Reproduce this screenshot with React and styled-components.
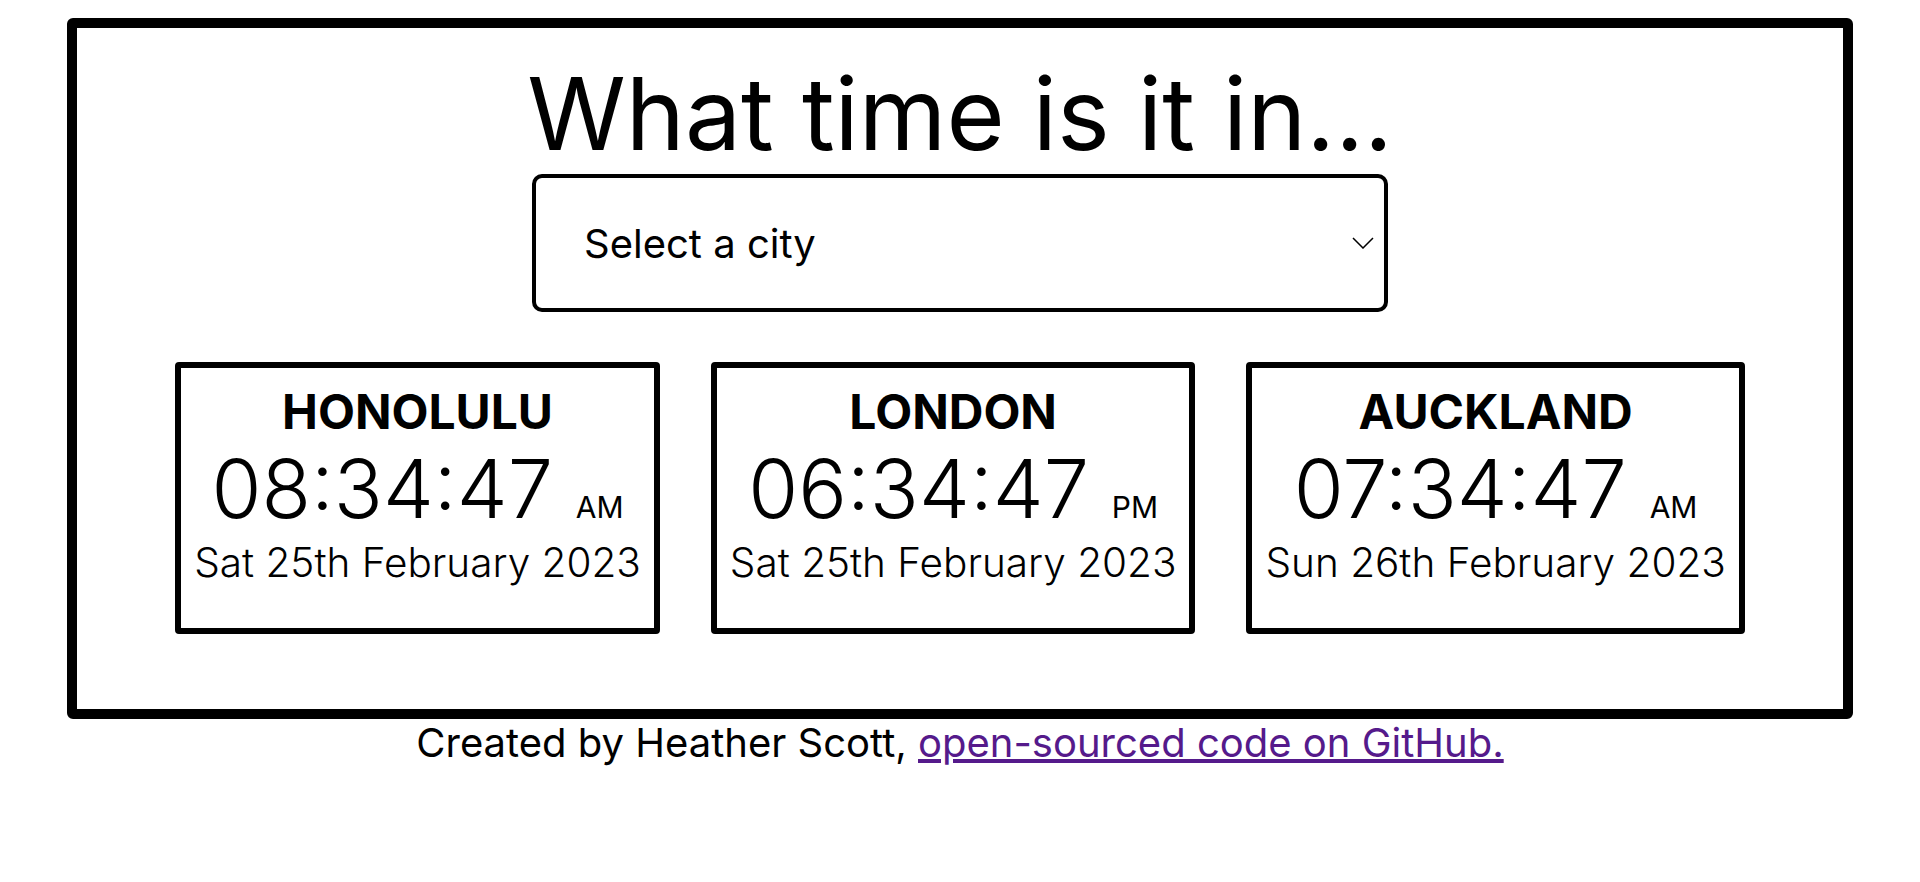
import React, { useState } from "react";
import styled, { createGlobalStyle } from "styled-components";

const GlobalStyle = createGlobalStyle`
  body {
    margin: 0;
    background: #fff;
    color: #000;
    font-family: Inter, "Noto Sans", sans-serif;
  }
`;

const Frame = styled.main`
  width: 93%;
  margin: 18px auto 0;
  box-sizing: border-box;
  border: 10px solid #000;
  border-radius: 6px;
  padding: 25px 0 75px;
  display: flex;
  flex-direction: column;
  align-items: center;
`;

const Title = styled.h1`
  margin: 0;
  font-size: 100px;
  line-height: 121px;
  font-weight: 400;
`;

const SelectWrap = styled.div`
  position: relative;
  width: 856px;
  height: 138px;
`;

const CitySelect = styled.select`
  appearance: none;
  width: 100%;
  height: 100%;
  box-sizing: border-box;
  border: 4px solid #000;
  border-radius: 10px;
  background: #fff;
  padding: 0 0 0 48px;
  font-family: Inter, sans-serif;
  font-size: 40px;
  color: #000;
  outline: none;
`;

const Chevron = styled.svg`
  position: absolute;
  right: 14px;
  top: 50%;
  transform: translateY(-50%);
  pointer-events: none;
`;

const CardRow = styled.div`
  display: flex;
  justify-content: center;
  gap: 51px;
  margin-top: 50px;
`;

const Card = styled.section`
  border: 6px solid #000;
  border-radius: 4px;
  padding: 15px 13px 40px;
  text-align: center;
`;

const City = styled.h2`
  margin: 0;
  font-size: 48px;
  line-height: 58px;
  font-weight: 700;
`;

const Time = styled.div`
  font-size: 81px;
  line-height: 97px;
  font-weight: 300;
`;

const Meridiem = styled.span`
  font-size: 30px;
  line-height: 1;
  font-weight: 400;
`;

const DateLine = styled.div`
  font-size: 40.5px;
  line-height: 50px;
  font-weight: 300;
`;

const Footer = styled.footer`
  text-align: center;
  font-size: 40px;
  line-height: 48px;
`;

const RepoLink = styled.a`
  color: #551a8b;
  text-decoration: underline;
`;

const clocks = [
  { city: "HONOLULU", time: "08:34:47", ampm: "AM", date: "Sat 25th February 2023" },
  { city: "LONDON", time: "06:34:47", ampm: "PM", date: "Sat 25th February 2023" },
  { city: "AUCKLAND", time: "07:34:47", ampm: "AM", date: "Sun 26th February 2023" },
];

export default function App() {
  const [city, setCity] = useState("");

  return (
    <>
      <GlobalStyle />
      <Frame>
        <Title>What time is it in...</Title>
        <SelectWrap>
          <CitySelect value={city} onChange={(e) => setCity(e.target.value)}>
            <option value="">Select a city</option>
            <option value="paris">Paris</option>
            <option value="tokyo">Tokyo</option>
            <option value="new-york">New York</option>
          </CitySelect>
          <Chevron width="22" height="12" viewBox="0 0 22 12" fill="none">
            <polyline points="1,1 11,11 21,1" stroke="#000" strokeWidth="1.5" />
          </Chevron>
        </SelectWrap>
        <CardRow>
          {clocks.map((c) => (
            <Card key={c.city}>
              <City>{c.city}</City>
              <Time>
                {c.time} <Meridiem>{c.ampm}</Meridiem>
              </Time>
              <DateLine>{c.date}</DateLine>
            </Card>
          ))}
        </CardRow>
      </Frame>
      <Footer>
        Created by Heather Scott, <RepoLink href="#">open-sourced code on GitHub.</RepoLink>
      </Footer>
    </>
  );
}
